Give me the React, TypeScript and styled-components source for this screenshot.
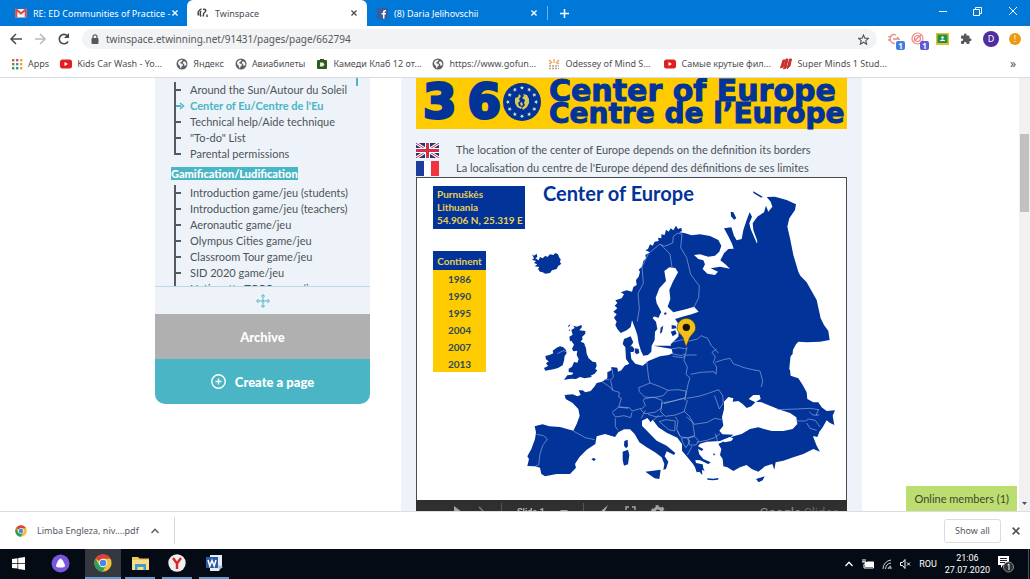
import React from "react";
import styled, { createGlobalStyle, css } from "styled-components";

const UI = `"Noto Sans", "Open Sans", sans-serif`;
const PAGE = `Lato, "Noto Sans", sans-serif`;
const NAVY = "#023399";
const TEAL = "#4ab5c4";
const YELLOW = "#fecb00";

const GlobalStyle = createGlobalStyle`
  * { box-sizing: border-box; }
  body { margin: 0; font-family: ${UI}; background: #fff; }
  button { font: inherit; color: inherit; border: 0; padding: 0; background: none; }
  a { color: inherit; text-decoration: none; }
  ul { list-style: none; margin: 0; padding: 0; }
  svg { display: block; flex: none; }
`;

const Screen = styled.div`
  height: 100vh;
  display: flex;
  flex-direction: column;
  overflow: hidden;
`;

/* ---------- tab strip ---------- */
const TabStrip = styled.header`
  flex: none;
  height: 26px;
  display: flex;
  align-items: stretch;
  background: #0078d7;
  color: #fff;
`;
const Tab = styled.div<{ $active?: boolean }>`
  flex: none;
  width: 180px;
  display: flex;
  align-items: center;
  gap: 6px;
  padding: 0 8px 0 10px;
  font-family: ${UI};
  font-size: 9px;
  white-space: nowrap;
  ${(p) =>
    p.$active &&
    css`
      background: #fff;
      color: #4a4d51;
      border-radius: 6px 6px 0 0;
    `}
  &:first-child {
    width: 187px;
    padding: 0 7px 0 15px;
  }
`;
const TabTitle = styled.span`
  flex: 1;
  min-width: 0;
`;
const IconButton = styled.button`
  display: flex;
  align-items: center;
  justify-content: center;
  min-width: 10px;
`;
const NewTab = styled(IconButton)`
  width: 34px;
  position: relative;
  &::before {
    content: "";
    width: 1px;
    height: 14px;
    background: #6db3ea;
    position: absolute;
    left: 0;
  }
`;
const WindowButtons = styled.div`
  margin-left: auto;
  display: flex;
  button {
    width: 35px;
    height: 22px;
  }
`;

/* ---------- toolbar ---------- */
const Toolbar = styled.div`
  flex: none;
  height: 26px;
  display: flex;
  align-items: center;
  padding: 0 9px;
  gap: 10px;
  background: #fff;
`;
const NavGroup = styled.div`
  display: flex;
  gap: 10px;
  width: 63px;
`;
const Address = styled.label`
  flex: 1;
  height: 20px;
  display: flex;
  align-items: center;
  gap: 7px;
  padding: 0 8px 0 9px;
  border-radius: 10px;
  background: #f1f3f4;
  input {
    flex: 1;
    min-width: 0;
    border: 0;
    padding: 0;
    background: none;
    outline: none;
    font: 10px ${UI};
    color: #54585c;
  }
`;
const Extensions = styled.div`
  display: flex;
  gap: 10px;
  align-items: center;
`;
const Ext = styled.button`
  position: relative;
  width: 14px;
  height: 16px;
  display: flex;
  align-items: center;
  justify-content: center;
`;
const Badge = styled.span<{ $color: string }>`
  position: absolute;
  right: -4px;
  bottom: -3px;
  width: 9px;
  height: 9px;
  border-radius: 2px;
  background: ${(p) => p.$color};
  color: #fff;
  font: bold 8px/9px ${UI};
  text-align: center;
`;
const Disc = styled.button<{ $size: number; $color: string }>`
  width: ${(p) => p.$size}px;
  height: ${(p) => p.$size}px;
  border-radius: 50%;
  background: ${(p) => p.$color};
  color: #fff;
  font-size: 9px;
  line-height: ${(p) => p.$size}px;
`;

/* ---------- bookmarks ---------- */
const Bookmarks = styled.nav`
  flex: none;
  height: 25px;
  display: flex;
  align-items: center;
  padding: 0 14px 2px 11px;
  color: #4c5054;
  font-size: 9px;
  white-space: nowrap;
`;
const Bookmark = styled.a<{ $long?: boolean }>`
  flex: none;
  display: flex;
  align-items: center;
  gap: 5px;
  padding-right: 11px;
  width: ${(p) => (p.$long ? "116px" : "auto")};
`;
const More = styled.button`
  margin-left: auto;
  font-size: 12px;
`;

/* ---------- page ---------- */
const Viewport = styled.div`
  flex: 1;
  min-height: 0;
  display: flex;
  position: relative;
  border-top: 1px solid #d9dcdf;
`;
const PageArea = styled.main`
  flex: 1;
  min-width: 0;
  overflow: hidden;
  display: flex;
  justify-content: center;
  align-items: flex-start;
  gap: 31px;
  padding-right: 2px;
  font-family: ${PAGE};
  font-size: 11px;
  color: #4d545a;
`;
const ScrollTrack = styled.div`
  width: 11px;
  background: #f1f1f1;
  display: flex;
  flex-direction: column;
  justify-content: flex-end;
  align-items: center;
  padding-bottom: 6px;
  position: relative;
  &::before {
    content: "";
    position: absolute;
    top: 13%;
    left: 1px;
    right: 1px;
    height: 18%;
    background: #c1c1c1;
  }
`;
const Sidebar = styled.aside`
  width: 215px;
  flex: none;
  border-radius: 0 0 10px 10px;
  overflow: hidden;
  background: #edf3f8;
`;
const TreePanel = styled.div`
  height: 209px;
  overflow: hidden;
  padding: 4px 11px 0 16px;
  border-bottom: 1px solid #b5dce6;
  position: relative;
  &::after {
    content: "";
    position: absolute;
    top: 0;
    right: 12px;
    width: 2px;
    height: 8px;
    background: ${TEAL};
  }
`;
const Tree = styled.ul`
  margin-left: 3px;
`;
const Leaf = styled.li<{ $current?: boolean; $last?: boolean }>`
  height: 16px;
  line-height: 16px;
  padding-left: 16px;
  position: relative;
  white-space: nowrap;
  ${(p) => p.$current && `color: ${TEAL}; font-weight: bold;`}
  &::before {
    content: "";
    position: absolute;
    left: 0;
    top: 0;
    width: 2px;
    height: ${(p) => (p.$last ? "9px" : "16px")};
    background: #555b60;
  }
  &::after {
    content: "";
    position: absolute;
    left: 2px;
    top: 7px;
    width: 5px;
    height: 2px;
    background: ${(p) => (p.$current ? TEAL : "#555b60")};
  }
`;
const Arrow = styled.svg`
  position: absolute;
  left: 5px;
  top: 4px;
`;
const TreeHeading = styled.h2`
  display: table;
  margin: 5px 0;
  font-size: 11px;
  line-height: 13px;
  font-weight: 900;
  color: #fff;
  background: ${TEAL};
`;
const DragRow = styled.div`
  height: 27px;
  display: flex;
  align-items: center;
  justify-content: center;
`;
const WideButton = styled.button<{ $color: string }>`
  width: 100%;
  height: 45px;
  display: flex;
  align-items: center;
  justify-content: center;
  gap: 9px;
  background: ${(p) => p.$color};
  color: #fff;
  font-size: 13px;
  font-weight: 900;
`;
const Article = styled.article`
  width: 461px;
  flex: none;
  padding: 0 15px;
  background: #edf3f8;
`;
const Banner = styled.div`
  height: 51px;
  display: flex;
  align-items: center;
  background: ${YELLOW};
  color: ${NAVY};
  padding: 0 0 4px 7px;
  font-family: "DejaVu Sans", sans-serif;
  font-weight: bold;
  white-space: nowrap;
`;
const Big = styled.span`
  flex: none;
  display: flex;
  justify-content: space-between;
  width: 78px;
  margin-right: 2px;
  font-size: 48px;
  line-height: 47px;
  -webkit-text-stroke: 3px ${NAVY};
`;
const BannerLines = styled.div`
  margin-left: 8px;
  -webkit-text-stroke: 1px ${NAVY};
`;
const BannerLine = styled.div<{ $size: number }>`
  font-size: ${(p) => p.$size}px;
  line-height: 23px;
`;
const Languages = styled.div`
  padding-top: 12px;
`;
const Language = styled.p`
  margin: 0;
  height: 18px;
  display: flex;
  align-items: center;
  gap: 17px;
  white-space: nowrap;
  line-height: 16px;
`;
const Slide = styled.section`
  position: relative;
  height: 323px;
  border: 1px solid #444c50;
  border-bottom: 0;
  background: #fff;
  padding: 8px 16px;
`;
const MapArt = styled.svg`
  position: absolute;
  left: 0;
  top: 0;
  width: 100%;
  height: 100%;
`;
const SlideHead = styled.div`
  position: relative;
  display: flex;
  gap: 18px;
  align-items: flex-start;
  color: ${NAVY};
`;
const Place = styled.div`
  width: 92px;
  padding: 2px 4px;
  background: ${NAVY};
  color: #e8cf52;
  font-weight: bold;
  font-size: 10px;
  line-height: 13px;
  white-space: nowrap;
`;
const SlideTitle = styled.h1`
  margin: 0;
  font-size: 20px;
  line-height: 15px;
  white-space: nowrap;
`;
const Years = styled.table`
  position: relative;
  margin-top: 22px;
  width: 53px;
  border-collapse: collapse;
  background: ${YELLOW};
  font-weight: bold;
  font-size: 10px;
  text-align: center;
  color: #2d4a5e;
  th {
    padding: 0;
    height: 19px;
    background: ${NAVY};
    color: #e8cf52;
  }
  td {
    padding: 0;
    height: 17px;
  }
`;
const Player = styled.div`
  height: 26px;
  display: flex;
  align-items: center;
  background: #2f2f2f;
  color: #b5b5b5;
  padding: 0 8px 2px 37px;
  gap: 15px;
  font: bold 9px Roboto, sans-serif;
`;
const Divider = styled.i`
  width: 1px;
  height: 18px;
  background: #555;
`;
const Brand = styled.span`
  margin-left: auto;
  font-size: 13px;
  font-weight: normal;
  color: #8a8a8a;
  i {
    font-style: normal;
    color: #666;
  }
`;
const Online = styled.button`
  position: absolute;
  right: 13px;
  bottom: 0;
  height: 25px;
  padding: 0 8px;
  background: #bcdd6f;
  color: #3c4733;
  font-family: ${PAGE};
  font-size: 11px;
  line-height: 25px;
`;

/* ---------- downloads ---------- */
const Downloads = styled.footer`
  flex: none;
  height: 38px;
  display: flex;
  align-items: center;
  padding: 0 9px 0 15px;
  border-top: 1px solid #dcdddf;
  font-size: 9px;
  color: #55595e;
`;
const Download = styled.div`
  width: 160px;
  height: 27px;
  display: flex;
  align-items: center;
  gap: 10px;
  border-right: 1px solid #d5d7d9;
  white-space: nowrap;
  button:last-child {
    margin-left: 1px;
  }
`;
const ShowAll = styled.button`
  margin-left: auto;
  margin-right: 10px;
  width: 57px;
  height: 24px;
  border: 1px solid #d9dce2;
  border-radius: 3px;
`;

/* ---------- taskbar ---------- */
const Taskbar = styled.footer`
  flex: none;
  height: 30px;
  display: flex;
  background: #050b14;
  color: #fff;
  padding-right: 1px;
`;
const Task = styled.button<{ $open?: boolean; $active?: boolean }>`
  width: ${(p) => (p.$active ? 36 : 30)}px;
  margin-right: ${(p) => (p.$active ? 4 : 7)}px;
  display: flex;
  align-items: center;
  justify-content: center;
  border-bottom: 2px solid ${(p) => (p.$open || p.$active ? "#5f9ed6" : "transparent")};
  background: ${(p) => (p.$active ? "#35393f" : "transparent")};
`;
const Launchers = styled.div`
  display: flex;
  padding-left: 3px;
  button:first-child {
    margin-right: 12px;
  }
  button:nth-child(2) {
    margin-right: 10px;
  }
`;
const Tray = styled.div`
  margin-left: auto;
  display: flex;
  align-items: center;
  gap: 8px;
  font: 9px Roboto, sans-serif;
  padding-right: 14px;
  border-right: 1px solid #4b5057;
`;
const Clock = styled.time`
  text-align: center;
  line-height: 12px;
`;

/* ---------- small drawings ---------- */
const Cross = ({ size = 6, color = "currentColor" }: { size?: number; color?: string }) => (
  <svg width={size} height={size} viewBox="0 0 8 8" stroke={color} strokeWidth="1.7">
    <path d="M.6.6l6.8 6.8M7.4.6L.6 7.4" />
  </svg>
);
const Globe = () => (
  <svg width="12" height="12" viewBox="0 0 24 24">
    <circle cx="12" cy="12" r="11" fill="#5b5e63" />
    <path d="M4 9c2-4 6-6 9-5l-1 3-3 1 0 3 4 1 1 3-3 2-1 4c-2-1-2-4-3-6-2-1-3-3-3-6zM16 6l4 3 1 5-4 2-1-4-3-2z" fill="#f4f4f4" />
  </svg>
);
const Tube = () => (
  <svg width="12" height="12" viewBox="0 0 24 24">
    <rect y="3" width="24" height="18" rx="5" fill="#e02020" />
    <path d="M9 8l7 4-7 4z" fill="#fff" />
  </svg>
);
const Grid = () => (
  <svg width="12" height="12" viewBox="0 0 12 12">
    {["#e0533f", "#e0533f", "#e8a83a", "#3f9d58", "#4a83e8", "#e8a83a", "#3f9d58", "#3f9d58", "#e8a83a"].map((c, i) => (
      <rect key={i} x={1 + (i % 3) * 4} y={1 + Math.floor(i / 3) * 4} width="2.4" height="2.4" fill={c} />
    ))}
  </svg>
);
const Camera = () => (
  <svg width="12" height="12" viewBox="0 0 12 12">
    <rect x="1" y="2" width="10" height="9" rx="1" fill="#2f5a22" />
    <path d="M4 1h4v2H4z" fill="#2f5a22" />
    <path d="M4 4.500l3 0 1.500 2-1.500 2h-3z" fill="#e4f0da" />
  </svg>
);
const Sun = () => (
  <svg width="12" height="12" viewBox="0 0 12 12" fill="none">
    <path d="M1 2l3 3M6 1v4M11 2L8 5M1 5l2 1M11 5L9 6" stroke="#e6a04a" strokeWidth="1.200" />
    <path d="M1 8h10M1 10.500h10" stroke="#b79f92" strokeWidth="1.500" strokeDasharray="2 1" />
  </svg>
);
const Stripes = () => (
  <svg width="12" height="12" viewBox="0 0 12 12">
    <path d="M3 2l2 0-2 7-2.500 1zM6 1l2 0-2 9-2.500 1zM9.500 1l2 0-1.500 7-3 3z" fill="#c9302c" stroke="#c9302c" />
  </svg>
);
const Chrome = ({ size }: { size: number }) => (
  <svg width={size} height={size} viewBox="0 0 24 24">
    <circle cx="12" cy="12" r="11.500" fill="#f2c13a" />
    <path d="M12 12L2 6.300A11.500 11.500 0 0 1 22 6.300H12z" fill="#dc4437" />
    <path d="M2 6.300A11.500 11.500 0 0 0 11.500 23.500L16.500 14.500 12 12 7 15z" fill="#2f9e58" />
    <circle cx="12" cy="12" r="5.600" fill="#fff" />
    <circle cx="12" cy="12" r="4.400" fill="#4a86e8" />
  </svg>
);
const Chevron = ({ width = 8 }: { width?: number }) => (
  <svg width={width} height="6" viewBox="0 0 8 6" fill="none" stroke="currentColor" strokeWidth="1.300">
    <path d="M.5 5L4 1.300 7.500 5" />
  </svg>
);
const Union = () => (
  <svg width="23" height="15" viewBox="0 0 46 30">
    <path fill="#26346f" d="M0 0h46v30H0z" />
    <path d="M0 0l46 30M46 0L0 30" stroke="#fff" strokeWidth="6" />
    <path d="M0 0l46 30M46 0L0 30" stroke="#d0304a" strokeWidth="2" />
    <path d="M23 0v30M0 15h46" stroke="#fff" strokeWidth="10" />
    <path d="M23 0v30M0 15h46" stroke="#d0304a" strokeWidth="6" />
  </svg>
);
const Tricolour = () => (
  <svg width="23" height="15" viewBox="0 0 23 15">
    <path fill="#1b3d9c" d="M0 0h8v15H0z" />
    <path fill="#fff" d="M8 0h7v15H8z" />
    <path fill="#f0353f" d="M15 0h8v15h-8z" />
  </svg>
);
const StarRing = () => (
  <svg width="38" height="38" viewBox="0 0 38 38">
    <circle cx="19" cy="19" r="19" fill={NAVY} />
    {Array.from({ length: 12 }, (_, i) => (
      <path
        key={i}
        d="M19 2.600l.6 1.400 1.500.1-1.100 1 .3 1.500-1.300-.8-1.300.8.3-1.500-1.100-1 1.500-.1z"
        fill="#cfe0c0"
        transform={`rotate(${i * 30} 19 19)`}
      />
    ))}
    <path
      d="M12 15l3-1 1-3 2 2-2 3 1 2-2 2 1 3 3 1-1 2-4-2-2-4zM20 11l4 1 2 4 0 4-2 4-4 3-1-2 3-3-1-2 1-3-3-2 2-2zM17 20l2-1 1 3-2 1z"
      fill="#d9c95a"
    />
  </svg>
);

/* Europe, drawn on a grid three times finer than the slide's pixels */
const Europe = () => (
  <MapArt viewBox="1251 537 1287 966" preserveAspectRatio="xMinYMin meet" aria-label="Map of Europe">
    <g fill={NAVY} strokeLinejoin="round">
      <g transform="translate(1230 528)">
        <path d="M366 238l6 4 8-6 2 10-6 4 10 6 4-10 8 4 8-8 6 4 8-8 10 2 6-6 8 4 4 10 4 4-2 10 4 4-10 8-4 8-14 4-6 8-14 2-8-4-8-2-6-8 4-6-14-2 8-6-10-4 6-6-12-4 6-4z" />
        <path d="M490 452l10 3 14-5 2 6-8 10 18 2 0 8-10 10 2 6-6 8 10 4 6 16 2 16 6 14 12 10 10 2 2 10-4 10 6 4-8 10-12 6 4 4-22 4-14-4-12 6-14-1-12 2-10 2 10-14 14-2 4-6-14-2 0-10 10-6 6-14 10 2 4-10-6-14 2-12-12 2-4-8 6-12-8-12-4 2-2-14 10-6-4-14 10-6z" />
        <path d="M440 518l10-4 10 3 8 8 2 10-6 8-2 14-4 14-14 8-14 4-24 4-4-8 12-6-6-8 8-6-8-6-2-10 14-4 10-4-2-8z" />
        <path d="M475 452l6-5-2 6-5 4zM476 466l4-3-1 6zM656 517l10-4 8 10-4 8-10 0zM676 520l10 2 2 12-8 4-6-6z" />
      </g>
      <g transform="translate(1860 528)">
        <path d="M440 66L465 65 500 75 528 88 525 105 508 130 502 155 510 190 520 240 535 290 541 302 560 322 590 375 602 430 612 450 625 468 629 495 600 500 560 502 535 500 528 508 516 530 512 540 500 660 160 660 160 545 157 530 152 508 175 485 178 450 165 432 192 424 215 418 236 410 222 395 200 402 160 412 143 395 151 372 148 345 158 322 174 292 166 279 148 277 133 288 138 318 118 340 107 368 110 385 118 400 124 412 118 420 102 424 98 430 108 440 112 462 105 470 104 495 95 512 94 530 84 540 70 542 63 528 56 505 52 480 46 462 36 436 32 456 20 466 2 474 -8 462 -14 450 -10 440 -18 428 -10 418 -20 410 -8 400 -16 392 -8 384 -14 376 5 370 12 358 2 352 20 346 36 350 40 336 50 330 48 315 56 305 60 290 56 284 66 275 70 258 78 250 76 240 90 232 76 226 84 222 90 208 98 212 104 200 116 198 114 188 124 190 124 178 134 180 138 164 146 170 152 160 160 166 168 152 174 162 184 158 186 168 178 172 196 175 215 181 240 178 270 183 295 195 304 212 298 230 285 242 265 245 240 238 222 240 235 252 250 256 255 268 248 282 262 296 285 300 294 290 272 280 300 275 330 281 316 268 301 256 312 235 325 222 341 221 336 206 325 184 312 160 334 157 342 182 350 196 365 192 370 165 380 135 389 112 396 125 388 145 392 162 402 185 411 206 412 198 400 165 398 145 412 125 432 112 438 92 445 110 457 95 452 80z" />
        <path d="M400 49l28 16-4 3-24-14zM332 110l8 2 9 18-7 4-9-10zM155 450l12 2 2 8-14 2zM152 470l14-4 4 10-12 8zM122 458l8-6-4 20-6 4zM132 414l6-2 2 5-6 3zM100 424l20-6-4 10z" />
      </g>
      <g transform="translate(1560 1050)">
        <path d="M400-10L819-10 818 15 795 40 800 58 810 62 812 80 835 88 848 108 860 130 862 150 880 160 895 160 905 175 920 186 945 184 938 200 943 228 930 222 920 214 908 235 900 246 880 250 880 265 890 290 900 308 880 300 850 315 820 325 790 335 767 340 763 362 757 345 735 352 715 368 695 360 680 348 660 355 640 366 622 355 610 352 608 330 600 318 604 300 595 285 612 277 640 262 665 255 690 240 715 235 735 241 755 246 790 246 818 240 832 225 829 205 810 192 780 182 750 170 725 160 708 158 722 150 718 135 726 112 715 118 700 138 686 150 706 160 694 172 680 177 668 165 655 156 638 158 640 148 625 144 612 158 612 180 606 205 610 230 598 245 607 256 640 257 632 264 600 276 560 278 540 284 534 292 550 300 546 306 534 300 538 316 550 330 572 340 566 344 544 334 526 333 528 342 548 346 550 358 554 366 546 362 547 378 538 368 530 370 525 355 519 345 500 322 486 305 486 285 472 266 440 251 415 235 398 212 392 220 382 207 366 215 366 230 385 250 410 275 440 290 466 312 462 318 440 307 434 322 445 338 438 360 430 362 433 345 425 325 405 310 380 295 358 280 344 255 330 241 312 241 295 250 285 264 255 255 230 262 226 285 200 302 178 325 165 345 168 356 150 375 110 375 75 382 64 375 60 356 45 352 22 351 27 330 22 322 34 300 45 270 48 250 44 232 55 229 68 226 88 232 120 234 160 245 170 225 179 200 175 180 158 162 137 150 134 138 158 136 172 142 182 138 176 124 188 124 196 130 212 126 224 112 230 102 246 98 262 88 262 70 274 64 274 54 292 56 294 68 304 64 314 50 328 44 318 30 316-5 308-15 312-30 332-38 340-20 330-5 334 30 346 44 368 50 385 36 420 22 446 18 460 12 456 0z" />
        <path d="M313 276l10-4 1 20-6 6-6-8zM308 308l16-6 4 16-4 28-12 4-4-16zM376 368l46-6-4 28-14-2zM214 331l6-4 8 3-6 6zM562 388l18 1 16-2-2 5-16 2-16-2zM708 390l26-8-6 12-12 6zM232 334l6-2zM540 328l28 14-4 3-24-12zM580 312l6 4-5 4z" />
        <path d="M830 248l70-4-8 20z" />
      </g>
    </g>
    <g fill="#fff">
      <path transform="translate(1560 1050)" d="M606 274l22-9 12 3-6 8-20 4z" />
    </g>
    <g fill="none" stroke="#93a9dc" strokeWidth="2" strokeLinejoin="round">
      <path
        transform="translate(1860 528)"
        d="M52 440l6-40-4-45 16-30-4-50 20-40 34-28 10 10 20 20 6 40M120 208l14 6 24-10 2-20 14-10 12 4-4 40 18 30 12 50 26 35-2 35-16 32M157 502l30-8 20 4 26-6 10-10 20 8 10 20 22 24M230 540l-30 0-12 8-30-4"
      />
      <path
        transform="translate(1560 1050)"
        d="M455 14l30 6 12-6 4-20M455 0l22-4 24 4M496 14l-4 20 10 20-4 22 12 10-6 20-6 30-4 18M512 76l30-6 40-2 6 8 2-22-10-14 6-16-10-14 14-10M586 40l24-8 20-4 10 16 32 12 26 6 22 4 8 30-4 18M380 38l6 50 4 14M356 116l34-14 28 10 26 12-14 16-30 6-26-2-16-16zM444 124l30-2 24 4-2 20-36 10-28 8M372 150l28-6 26 10-2 24-20 12-30 4-12-12 14-12-6-16zM426 162l34-6 34-8 8 8-10 32-26 10-30 4-14-14zM500 148l36-6 26-8 34-12 12 18 2 22-12 18-14-40M492 186l16 16 14 24 40-6 22-12 20 4M276 60l4 24-8 10 6 30 20 6-2 14 8 4-8 26 28 4M246 98l18 12 16 14M268 92l-16 0M276 190l20-16 32 2 8 10 28-8M278 192l8 12 26-4 20 6 4-16M286 208l0 24 8 12M376 184l-12 24M384 196l26 8 20-4M400 214l16-16M418 218l20-6 28 4-2 30-18-4zM466 204l8 12-4 24 10 22M500 204l18 16 6 40-20 6-22-2-10-18M484 268l14-2 12 10-12 20-8-12zM504 268l20-6 12 14-8 12-20 0zM530 280l30-6 24-8 16-12M586 254l8 26M516 292l-14 26M160 246l36 20 28 6M50 256l20 4 12 10-14 20-8 24-4 34-10 4M770 182l60-2 40-2 26 4M826 216l30 0 10-6 20 4 14 20M868 188l10 10 20 0M860 222l10 16 20 6M896 180l-8 20M112 14l20-10 10 8"
      />
    </g>
    <g transform="translate(1860 528)">
      <path d="M198 516l-9-28c-8-13-18-18-18-30a28 28 0 0 1 56 0c0 12-10 17-18 30z" fill="#f2c018" stroke="#3c3a20" strokeWidth="2" />
      <circle cx="199" cy="457" r="11" fill="#16130a" />
    </g>
  </MapArt>
);

const leaves = ["Around the Sun/Autour du Soleil", "Center of Eu/Centre de l'Eu", "Technical help/Aide technique", "\"To-do\" List", "Parental permissions"];
const games = ["Introduction game/jeu (students)", "Introduction game/jeu (teachers)", "Aeronautic game/jeu", "Olympus Cities game/jeu", "Classroom Tour game/jeu", "SID 2020 game/jeu", "Nationette TOP5 game/jeu"];
const years = [1986, 1990, 1995, 2004, 2007, 2013];
const bookmarks: { icon: React.ReactNode; label: string; long?: boolean }[] = [
  { icon: <Grid />, label: "Apps" },
  { icon: <Tube />, label: "Kids Car Wash - Yo...", long: true },
  { icon: <Globe />, label: "Яндекс" },
  { icon: <Globe />, label: "Авиабилеты" },
  { icon: <Camera />, label: "Камеди Клаб 12 от...", long: true },
  { icon: <Globe />, label: "https://www.gofun...", long: true },
  { icon: <Sun />, label: "Odessey of Mind S...", long: true },
  { icon: <Tube />, label: "Самые крутые фил...", long: true },
  { icon: <Stripes />, label: "Super Minds 1 Stud...", long: true },
];

export default function App() {
  return (
    <Screen>
      <GlobalStyle />
      <TabStrip>
        <Tab>
          <svg width="12" height="10" viewBox="0 0 24 20">
            <path d="M1 2h22v17H1z" fill="#f4f0f0" />
            <path d="M2.500 19V3L12 11l9.500-8v16" fill="none" stroke="#dc4a3f" strokeWidth="4" />
          </svg>
          <TabTitle>RE: ED Communities of Practice -</TabTitle>
          <IconButton aria-label="Close tab"><Cross /></IconButton>
        </Tab>
        <Tab $active>
          <svg width="12" height="10" viewBox="0 0 24 20" fill="none" stroke="#44474a" strokeWidth="3">
            <path d="M9 2C3 4 1 9 3 15M8 6c-2 4-2 8 0 11M12 3c5-2 7 2 4 5-3 2-4 5-3 9M20 13v5" />
          </svg>
          <TabTitle>Twinspace</TabTitle>
          <IconButton aria-label="Close tab"><Cross /></IconButton>
        </Tab>
        <Tab>
          <svg width="11" height="11" viewBox="0 0 22 22">
            <rect width="22" height="22" rx="4" fill="#3d5a9c" />
            <path d="M12 21v-8h-3v-3h3V8c0-3 2-4.500 6-4v3c-2 0-3 0-3 2v1h3l-.5 3H15v8z" fill="#fff" />
          </svg>
          <TabTitle>(8) Daria Jelihovschii</TabTitle>
          <IconButton aria-label="Close tab"><Cross /></IconButton>
        </Tab>
        <NewTab aria-label="New tab">
          <svg width="9" height="9" viewBox="0 0 9 9" stroke="#fff" strokeWidth="1.500"><path d="M4.500 0v9M0 4.500h9" /></svg>
        </NewTab>
        <WindowButtons>
          <IconButton aria-label="Minimize"><svg width="8" height="8" viewBox="0 0 8 8" stroke="#fff"><path d="M0 4.500h8" /></svg></IconButton>
          <IconButton aria-label="Restore"><svg width="9" height="9" viewBox="0 0 9 9" fill="none" stroke="#fff"><path d="M.5 2.500h6v6h-6zM2.500 2.500v-2h6v6h-2" /></svg></IconButton>
          <IconButton aria-label="Close"><svg width="8" height="8" viewBox="0 0 8 8" stroke="#fff"><path d="M0 0l8 8M8 0L0 8" /></svg></IconButton>
        </WindowButtons>
      </TabStrip>

      <Toolbar>
        <NavGroup>
          <IconButton aria-label="Back"><svg width="14" height="12" viewBox="0 0 14 12" fill="none" stroke="#4a4d50" strokeWidth="1.500"><path d="M13 6H2M7 1L2 6l5 5" /></svg></IconButton>
          <IconButton aria-label="Forward"><svg width="14" height="12" viewBox="0 0 14 12" fill="none" stroke="#b9bbbe" strokeWidth="1.500"><path d="M2 6h10M7 1l5 5-5 5" /></svg></IconButton>
          <IconButton aria-label="Reload"><svg width="14" height="12" viewBox="0 0 14 12" fill="none" stroke="#4a4d50" strokeWidth="1.600"><path d="M11 8.500A4.700 4.700 0 1 1 10.500 3" /><path d="M12 0v5H7z" fill="#4a4d50" stroke="none" /></svg></IconButton>
        </NavGroup>
        <Address>
          <svg width="8" height="10" viewBox="0 0 8 10"><rect x=".5" y="4" width="7" height="6" rx="1" fill="#55585c" /><path d="M2 4V2.800a2 2 0 0 1 4 0V4" fill="none" stroke="#55585c" strokeWidth="1.200" /></svg>
          <input aria-label="Address" defaultValue="twinspace.etwinning.net/91431/pages/page/662794" />
          <svg width="11" height="11" viewBox="0 0 24 24" fill="none" stroke="#55585c" strokeWidth="2.400"><path d="M12 2l3 7 8 .5-6 5 2 8-7-4.500-7 4.500 2-8-6-5L9 9z" /></svg>
        </Address>
        <Extensions>
          <Ext aria-label="Extension">
            <svg width="14" height="13" viewBox="0 0 14 13" fill="none" stroke="#e88a86" strokeWidth="1.300"><path d="M9 2C6 0 3 3 3 6s3 5 5 4M1 4l3-1M1 7h3M6 6h6l-2-2" /></svg>
            <Badge $color="#3f7fe0">1</Badge>
          </Ext>
          <Ext aria-label="Extension">
            <svg width="14" height="14" viewBox="0 0 14 14" fill="none" stroke="#ee8583" strokeWidth="1.200"><circle cx="6.500" cy="6.500" r="5.500" /><circle cx="6.500" cy="6.500" r="3" /><path d="M3 9l7-6" /></svg>
            <Badge $color="#5b5bd6">1</Badge>
          </Ext>
          <Ext aria-label="Classroom">
            <svg width="13" height="12" viewBox="0 0 13 12"><path d="M0 0h13v12H0z" fill="#e0c02c" /><path d="M1.500 1.500h10v8.500h-10z" fill="#239150" /><circle cx="6.500" cy="4.500" r="1.200" fill="#fff" /><path d="M4 8c0-2 5-2 5 0z" fill="#fff" /></svg>
          </Ext>
          <Ext aria-label="Extensions">
            <svg width="12" height="12" viewBox="0 0 24 24" fill="#55585c"><path d="M20.500 11H19V7a2 2 0 0 0-2-2h-4V3.500a2.500 2.500 0 0 0-5 0V5H4a2 2 0 0 0-2 2v3.800h1.500a2.700 2.700 0 0 1 0 5.400H2V20c0 1.100.9 2 2 2h3.800v-1.500a2.700 2.700 0 0 1 5.400 0V22H17a2 2 0 0 0 2-2v-4h1.500a2.500 2.500 0 0 0 0-5z" /></svg>
          </Ext>
          <Disc $size={16} $color="#4f2d9e" aria-label="Profile">D</Disc>
          <Disc $size={12} $color="#eb9a12" aria-label="Update">!</Disc>
        </Extensions>
      </Toolbar>

      <Bookmarks aria-label="Bookmarks">
        {bookmarks.map((b) => (
          <Bookmark key={b.label} href="#" $long={b.long}>{b.icon}{b.label}</Bookmark>
        ))}
        <More aria-label="More bookmarks">»</More>
      </Bookmarks>

      <Viewport>
        <PageArea>
          <Sidebar>
            <TreePanel>
              <Tree>
                {leaves.map((l, i) => (
                  <Leaf key={l} $current={i === 1} $last={i === leaves.length - 1}>
                    {i === 1 && (
                      <Arrow width="6" height="8" viewBox="0 0 6 8" fill="none" stroke={TEAL} strokeWidth="1.500"><path d="M1 1l3.500 3L1 7" /></Arrow>
                    )}
                    <a href="#">{l}</a>
                  </Leaf>
                ))}
              </Tree>
              <TreeHeading>Gamification/Ludification</TreeHeading>
              <Tree>
                {games.map((g) => (
                  <Leaf key={g}><a href="#">{g}</a></Leaf>
                ))}
              </Tree>
            </TreePanel>
            <DragRow>
              <svg width="14" height="14" viewBox="0 0 14 14" fill="none" stroke={TEAL}><path d="M7 1v12M1 7h12M5 2.500L7 .7l2 1.800M5 11.500l2 1.800 2-1.800M2.500 5L.7 7l1.800 2M11.500 5l1.800 2-1.800 2" /></svg>
            </DragRow>
            <WideButton $color="#b0b0b0">Archive</WideButton>
            <WideButton $color={TEAL}>
              <svg width="15" height="15" viewBox="0 0 15 15" fill="none" stroke="#fff" strokeWidth="1.400"><circle cx="7.500" cy="7.500" r="6.700" /><path d="M7.500 4.500v6M4.500 7.500h6" /></svg>
              Create a page
            </WideButton>
          </Sidebar>

          <Article>
            <Banner>
              <Big><span>3</span><span>6</span></Big>
              <StarRing />
              <BannerLines>
                <BannerLine $size={30}>Center of Europe</BannerLine>
                <BannerLine $size={28}>Centre de l’Europe</BannerLine>
              </BannerLines>
            </Banner>
            <Languages>
              <Language><Union />The location of the center of Europe depends on the definition its borders</Language>
              <Language><Tricolour />La localisation du centre de l'Europe dépend des définitions de ses limites</Language>
            </Languages>
            <Slide>
              <Europe />
              <SlideHead>
                <Place>Purnuškės<br />Lithuania<br />54.906 N, 25.319 E</Place>
                <SlideTitle>Center of Europe</SlideTitle>
              </SlideHead>
              <Years>
                <thead><tr><th scope="col">Continent</th></tr></thead>
                <tbody>{years.map((y) => <tr key={y}><td>{y}</td></tr>)}</tbody>
              </Years>
            </Slide>
            <Player>
              <svg width="9" height="12" viewBox="0 0 9 12" fill="#a5a5a5"><path d="M1 0l8 6-8 6z" /></svg>
              <svg width="9" height="12" viewBox="0 0 9 12" fill="none" stroke="#777" strokeWidth="1.500"><path d="M2 1l5 5-5 5" /></svg>
              <Divider />
              <span>Slide 1</span>
              <svg width="8" height="5" viewBox="0 0 8 5" fill="#a5a5a5"><path d="M0 0h8L4 5z" /></svg>
              <Divider />
              <svg width="11" height="14" viewBox="0 0 11 14" fill="#a5a5a5"><path d="M9 0L1 7l4 1-3 6 8-7-4-1z" /></svg>
              <svg width="11" height="14" viewBox="0 0 11 14" fill="none" stroke="#a5a5a5" strokeWidth="1.500"><path d="M1 5V2h3M7 2h3v3M1 10v3h3M7 13h3v-3" /></svg>
              <svg width="14" height="14" viewBox="0 0 14 14" fill="none" stroke="#a5a5a5"><circle cx="7" cy="7" r="4" strokeWidth="3" /><circle cx="7" cy="7" r="6" strokeWidth="2" strokeDasharray="3 3.280" /></svg>
              <Brand>Google <i>Slides</i></Brand>
            </Player>
          </Article>
        </PageArea>
        <ScrollTrack>
          <svg width="5" height="3" viewBox="0 0 5 3" fill="#4c4f52"><path d="M0 0h5L2.500 3z" /></svg>
        </ScrollTrack>
        <Online>Online members (1)</Online>
      </Viewport>

      <Downloads>
        <Download>
          <Chrome size={12} />
          <button>Limba Engleza, niv....pdf</button>
          <IconButton aria-label="Download options"><Chevron /></IconButton>
        </Download>
        <ShowAll>Show all</ShowAll>
        <IconButton aria-label="Close downloads"><Cross size={8} /></IconButton>
      </Downloads>

      <Taskbar>
        <Launchers>
          <Task aria-label="Start"><svg width="13" height="13" viewBox="0 0 13 13" fill="#fff"><path d="M0 2l5.500-.8V6H0zM6.200 1.100L13 0v6H6.200zM0 6.800h5.500v4.800L0 11zM6.200 6.800H13V13l-6.800-1.100z" /></svg></Task>
          <Task aria-label="Alice"><svg width="19" height="19" viewBox="0 0 19 19"><circle cx="9.500" cy="9.500" r="9" fill="#7a55e0" /><path d="M9.500 4.500c1.500 0 4.500 5.500 4.500 7.500s-9 2-9 0 3-7.500 4.500-7.500z" fill="#fff" /></svg></Task>
          <Task aria-label="Chrome" $active><Chrome size={18} /></Task>
          <Task aria-label="Explorer" $open><svg width="17" height="15" viewBox="0 0 17 15"><path d="M0 1h6l1.500 1.500H17V14H0z" fill="#efc75a" /><path d="M0 4h17v10H0z" fill="#f8dc86" /><path d="M3 8h11v6h-2.500v-3h-6v3H3z" fill="#3a9fd0" /></svg></Task>
          <Task aria-label="Yandex" $open><svg width="18" height="18" viewBox="0 0 18 18"><circle cx="9" cy="9" r="8.700" fill="#f2f0ee" /><path d="M5 4l4 5.500L13 4M9 9v6" fill="none" stroke="#d32a2a" strokeWidth="2.400" /></svg></Task>
          <Task aria-label="Word" $open><svg width="17" height="16" viewBox="0 0 17 16"><path d="M4 0h12v11l-3 5H4z" fill="#e6edf6" /><path d="M0 2h12v11H0z" fill="#2c5ca8" /><path d="M2 5l1.800 6L6 5.500 8.200 11 10 5" fill="none" stroke="#fff" strokeWidth="1.500" /><path d="M12 10l5 2-4 3z" fill="#a5bfe0" /></svg></Task>
        </Launchers>
        <Tray>
          <IconButton aria-label="Hidden icons"><Chevron /></IconButton>
          <svg width="12" height="10" viewBox="0 0 12 10"><path d="M3 3h8v5H3z" fill="#fff" /><path d="M1 0v3M3 0v3M0 3h4v2H2v4h9.500V3H5" fill="none" stroke="#fff" /></svg>
          <svg width="10" height="10" viewBox="0 0 10 10" fill="none" stroke="#cfd2d6"><path d="M1 10a9 9 0 0 1 8-9M3.500 10A6.500 6.500 0 0 1 9 4M6 10a4 4 0 0 1 3-3" /><circle cx="8.500" cy="9" r=".8" /></svg>
          <svg width="11" height="10" viewBox="0 0 11 10" fill="none" stroke="#fff"><path d="M.5 3.500h2l2.500-3v9l-2.500-3h-2zM7 3.500l3 3M10 3.500l-3 3" /></svg>
          <span>ROU</span>
          <Clock>21:06<br />27.07.2020</Clock>
          <svg width="16" height="18" viewBox="0 0 16 18"><path d="M0 1h11v9H5L3 13v-3H0z" fill="#fff" /><path d="M2 3.500h7M2 5.500h7M2 7.500h5" stroke="#222" /><circle cx="10.500" cy="12" r="5" fill="#2c3036" stroke="#8b9096" /><path d="M9.500 10l1.500-1v6" fill="none" stroke="#fff" /></svg>
        </Tray>
      </Taskbar>
    </Screen>
  );
}
